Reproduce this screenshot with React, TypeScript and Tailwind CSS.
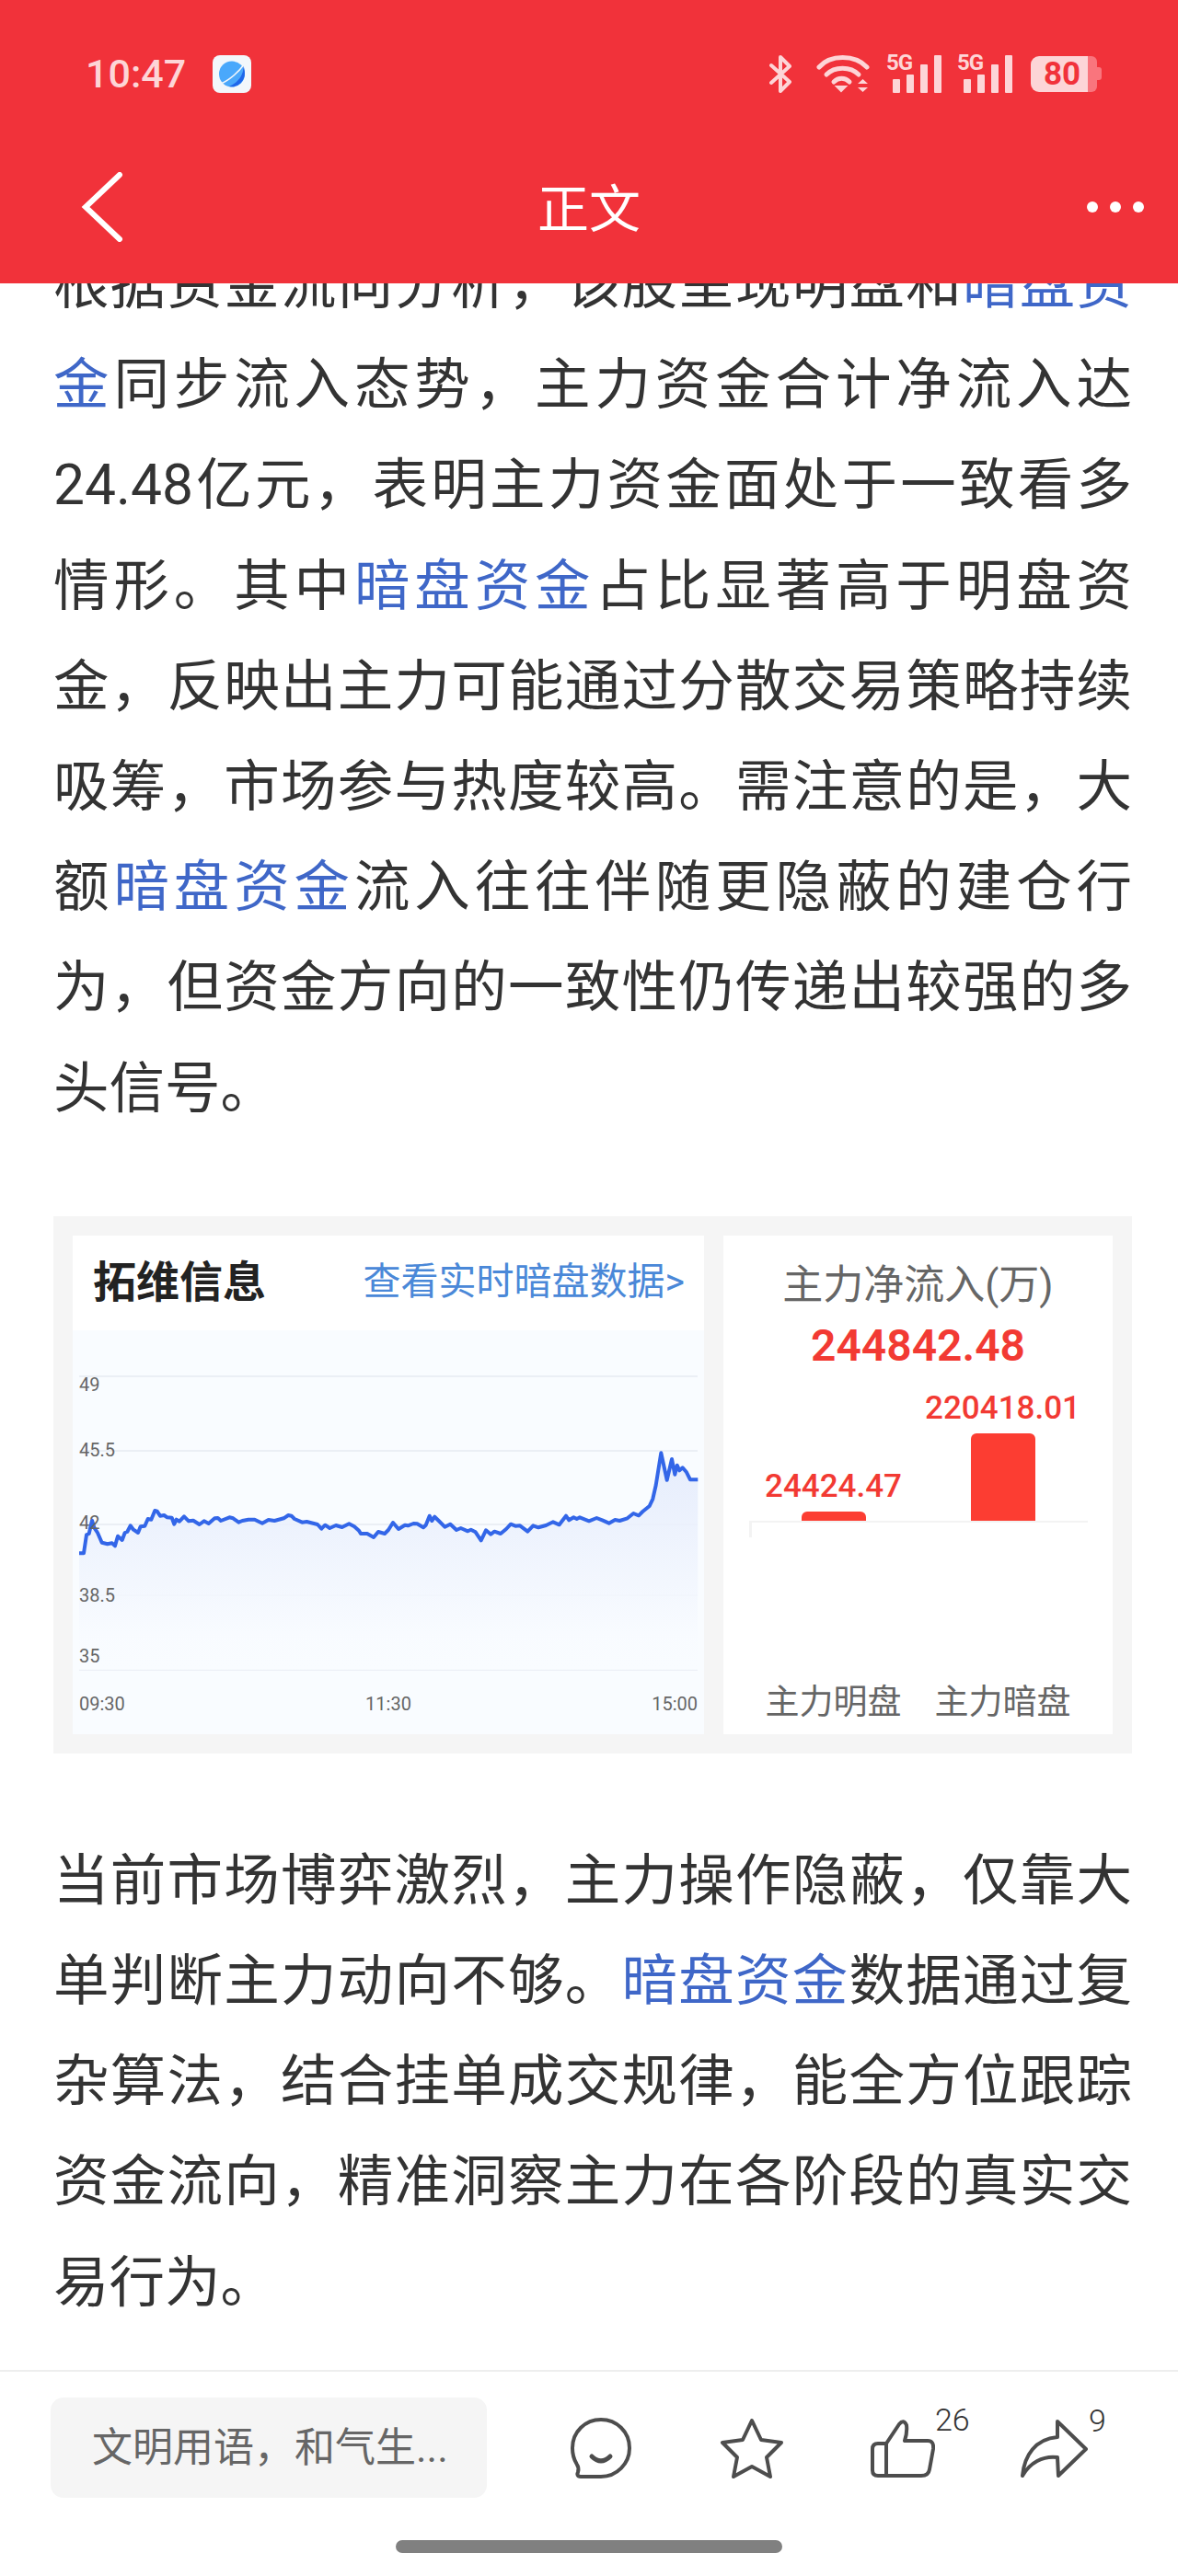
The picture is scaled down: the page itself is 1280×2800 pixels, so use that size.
const leftPart: Array<[number, number]> = [
  [48, 382], [63, 382], [72, 322], [80, 318], [90, 275], [97, 298], [108, 315], [122, 347], [140, 352], [155, 349],
  [165, 358], [174, 326], [188, 339], [197, 315], [205, 312], [215, 292], [225, 305], [240, 315], [248, 295], [262, 293],
  [272, 270], [283, 272], [295, 243], [302, 245], [312, 260], [325, 258], [335, 265], [350, 266], [358, 287], [365, 272],
  [375, 278], [390, 262], [405, 277], [420, 275], [440, 288], [455, 277], [470, 285], [490, 268], [500, 267], [510, 276],
  [538, 265], [550, 268], [568, 281], [580, 276], [600, 272], [620, 272], [645, 284], [665, 273], [685, 276], [715, 268],
  [730, 258], [740, 260], [750, 270], [775, 281], [790, 279], [825, 288], [838, 302], [850, 290], [865, 300], [885, 291],
  [905, 297], [928, 286], [945, 295], [960, 308],
]

const midPart: Array<[number, number]> = [
  [392, 1666], [399, 1666], [406, 1670], [411, 1664], [418, 1666], [422, 1662], [427, 1654], [433, 1661],
]

const rightPart: Array<[number, number]> = [
  [0, 290], [10, 292], [28, 285], [40, 286], [60, 298], [68, 290], [80, 260], [88, 276], [97, 263], [110, 276],
  [130, 296], [148, 287], [168, 306], [182, 300], [205, 310], [215, 305], [230, 313], [248, 340], [264, 307], [280, 320],
  [292, 311], [312, 318], [330, 303], [345, 287], [360, 293], [375, 292], [400, 311], [418, 292], [435, 298], [460, 291],
  [483, 280], [503, 289], [525, 260], [535, 274], [550, 265], [560, 270], [570, 265], [600, 277], [625, 267], [645, 275],
  [665, 284], [685, 273], [700, 276], [725, 268], [745, 252], [762, 259], [775, 246], [797, 228], [808, 205], [818, 160],
  [835, 55], [854, 143], [870, 75], [880, 125], [887, 95], [895, 112], [905, 103], [918, 118], [930, 142], [955, 142],
]

const points: Array<[number, number]> = [
  ...leftPart.map(([x, y]): [number, number] => [70 + x / 3, 1560 + y / 3]),
  ...midPart,
  ...rightPart.map(([x, y]): [number, number] => [440 + x / 3, 1560 + y / 3]),
]

const linePath = points.map(([x, y], i) => `${i === 0 ? 'M' : 'L'}${x.toFixed(1)} ${y.toFixed(1)}`).join(' ')
const areaPath = `${linePath} L758 1814 L86 1814 Z`

const gridLines = [1495, 1576, 1656, 1733, 1814]
const yLabels: Array<{ label: string; y: number }> = [
  { label: '49', y: 1511 },
  { label: '45.5', y: 1582 },
  { label: '42', y: 1661 },
  { label: '38.5', y: 1740 },
  { label: '35', y: 1806 },
]

function A({ children }: { children: string }) {
  return <span className="text-[#3f67c8]">{children}</span>
}

function Signal({ className }: { className?: string }) {
  return (
    <div className={`relative h-[41px] w-[60px] ${className ?? ''}`}>
      <span className="absolute -top-[1px] left-0 text-[24px] font-bold leading-[19px] tracking-[-1px] text-[#fdd5d7]">5G</span>
      <svg className="absolute inset-0" width="60" height="41" viewBox="0 0 60 41" fill="#fdd5d7">
        <rect x="7" y="26" width="8" height="15" rx="1" />
        <rect x="22" y="21" width="8" height="20" rx="1" />
        <rect x="37" y="10" width="8" height="31" rx="1" />
        <rect x="52" y="0" width="8" height="41" rx="1" />
      </svg>
    </div>
  )
}

function StatusBar() {
  return (
    <div className="flex h-[142px] items-center justify-between pl-[93px] pr-[83px] pt-[18px]">
      <div className="flex items-center">
        <span className="text-[43px] font-medium leading-none text-[#fdd5d7]">10:47</span>
        <svg className="ml-[29px]" width="42" height="41" viewBox="0 0 42 41">
          <rect width="42" height="41" rx="8" fill="#f3f7fb" />
          <circle cx="21" cy="20.5" r="14" fill="#4aa8fb" />
          <path d="M33 10 C35 18 30 29 18 34 C26 36 35 29 35 20 C35 16 34 13 33 10 Z" fill="#1f66ea" />
          <path d="M7 31 C11 31 24 24 35 9" stroke="#f3f7fb" strokeWidth="1.5" fill="none" />
        </svg>
      </div>
      <div className="flex items-center">
        <svg width="25" height="41" viewBox="0 0 25 41" fill="none" stroke="#fdd5d7" strokeWidth="4" strokeLinejoin="round" strokeLinecap="round">
          <path d="M2 11 L22 29 L12 39 V2 L22 12 L2 30" />
        </svg>
        <svg className="ml-[26px]" width="58" height="41" viewBox="0 0 58 41" fill="none" stroke="#fdd5d7" strokeWidth="5" strokeLinecap="round">
          <path d="M3 13 C15 -1 42 -1 55 13" />
          <path d="M11 21 C20 12 37 12 46 21" />
          <path d="M19 29 C24 24 31 24 36 29" />
          <path d="M22 34 L27 39 L32 34 Z" fill="#fdd5d7" strokeWidth="2" />
          <path d="M45 31 H56 L50.5 26 Z M45 35 H56 L50.5 40 Z" fill="#fdd5d7" stroke="none" />
        </svg>
        <Signal className="ml-[18px]" />
        <Signal className="ml-[17px]" />
        <div className="ml-[20px] flex h-[39px] items-center">
          <div className="flex h-[39px] w-[62px] items-center justify-center rounded-l-[9px] bg-[#fdd5d7] pl-[6px] text-[35px] font-bold leading-none text-[#f1323a]">
            80
          </div>
          <div className="h-[39px] w-[10px] rounded-r-[6px] bg-[#f9757d]" />
          <div className="h-[14px] w-[5px] rounded-r-[3px] bg-[#f9757d]" />
        </div>
      </div>
    </div>
  )
}

function Header() {
  return (
    <header className="relative z-10 h-[308px] shrink-0 bg-[#f1323a]">
      <StatusBar />
      <div className="grid h-[166px] grid-cols-3 items-center pl-[88px] pr-[37px]">
        <svg width="46" height="76" viewBox="0 0 46 76" fill="none" stroke="#fff" strokeWidth="6" strokeLinecap="round" strokeLinejoin="miter">
          <path d="M42 3 L5 38 L42 73" />
        </svg>
        <div className="-ml-[51px] mt-[5px] text-center text-[56px] font-normal leading-none text-white">正文</div>
        <div className="flex justify-end gap-[13px]">
          <span className="size-[12px] rounded-full bg-white" />
          <span className="size-[12px] rounded-full bg-white" />
          <span className="size-[12px] rounded-full bg-white" />
        </div>
      </div>
    </header>
  )
}

function PriceChart() {
  return (
    <svg width="686" height="444" viewBox="79 1445 686 444" className="block">
      <defs>
        <linearGradient id="area" x1="0" y1="1560" x2="0" y2="1814" gradientUnits="userSpaceOnUse">
          <stop offset="0" stopColor="#e0e8fb" />
          <stop offset="0.85" stopColor="#f8fbff" />
          <stop offset="1" stopColor="#f9fcff" />
        </linearGradient>
      </defs>
      {gridLines.map((y) => (
        <rect key={y} x="86" y={y - 1} width="672" height="2" fill="#ebeff5" />
      ))}
      <path d={areaPath} fill="url(#area)" fillOpacity="0.85" />
      <path d={linePath} fill="none" stroke="#3366e8" strokeWidth="4" strokeLinejoin="round" />
      {yLabels.map((l) => (
        <text key={l.label} x="86" y={l.y} fontSize="20" fill="#666">
          {l.label}
        </text>
      ))}
      <text x="86" y="1858" fontSize="20" fill="#666">09:30</text>
      <text x="422" y="1858" fontSize="20" fill="#666" textAnchor="middle">11:30</text>
      <text x="758" y="1858" fontSize="20" fill="#666" textAnchor="end">15:00</text>
    </svg>
  )
}

function FlowPanel() {
  return (
    <div className="flex w-[423px] flex-col items-center bg-white">
      <div className="mt-[31px] text-[44px] leading-[46px] text-[#666]">主力净流入(万)</div>
      <div className="mt-[18px] text-[48px] font-semibold leading-[50px] text-[#f23a33]">244842.48</div>
      <div className="mt-[24px] flex h-[143px] w-[368px] items-end border-b-2 border-[#f3f3f3]">
        <div className="flex w-[184px] flex-col items-center">
          <div className="text-[35px] font-medium leading-[40px] text-[#f23a33]">24424.47</div>
          <div className="mt-[7px] h-[10px] w-[70px] rounded-t-[6px] bg-[#fc3d32]" />
        </div>
        <div className="flex w-[184px] flex-col items-center">
          <div className="text-[35px] font-medium leading-[40px] text-[#f23a33]">220418.01</div>
          <div className="mt-[7px] h-[95px] w-[70px] rounded-t-[6px] bg-[#fc3d32]" />
        </div>
      </div>
      <div className="h-[16px] w-[368px]">
        <div className="h-[16px] w-[3px] bg-[#f3f3f3]" />
      </div>
      <div className="mt-[160px] flex w-[368px]">
        <div className="w-[184px] text-center text-[37px] leading-[40px] text-[#666]">主力明盘</div>
        <div className="w-[184px] text-center text-[37px] leading-[40px] text-[#666]">主力暗盘</div>
      </div>
    </div>
  )
}

function DataCard() {
  return (
    <div className="mt-[84px] mb-[84px] flex h-[584px] justify-between bg-[#f5f5f5] px-[21px] py-[21px]">
      <div className="w-[686px] bg-[#f9fcff]">
        <div className="flex h-[103px] items-center justify-between bg-white pb-[2px] pl-[22px] pr-[21px]">
          <div className="text-[47px] font-bold leading-none text-[#222]">拓维信息</div>
          <div className="text-[41px] leading-none text-[#4a88d8]">查看实时暗盘数据&gt;</div>
        </div>
        <PriceChart />
      </div>
      <FlowPanel />
    </div>
  )
}

function Article() {
  return (
    <main className="-mt-[53px] min-h-0 flex-1 pl-[58px] pr-[50px] text-justify text-[60.5px] leading-[109.2px] text-[#333]">
      <p>
        根据资金流向分析，该股呈现明盘和<A>暗盘资金</A>同步流入态势，主力资金合计净流入达24.48亿元，表明主力资金面处于一致看多情形。其中<A>暗盘资金</A>占比显著高于明盘资金，反映出主力可能通过分散交易策略持续吸筹，市场参与热度较高。需注意的是，大额<A>暗盘资金</A>流入往往伴随更隐蔽的建仓行为，但资金方向的一致性仍传递出较强的多头信号。
      </p>
      <DataCard />
      <p>
        当前市场博弈激烈，主力操作隐蔽，仅靠大单判断主力动向不够。<A>暗盘资金</A>数据通过复杂算法，结合挂单成交规律，能全方位跟踪资金流向，精准洞察主力在各阶段的真实交易行为。
      </p>
    </main>
  )
}

function Footer() {
  const stroke = { fill: 'none', stroke: '#4d4d4d', strokeWidth: 4, strokeLinejoin: 'round' as const, strokeLinecap: 'round' as const }
  return (
    <footer className="relative z-10 h-[224px] shrink-0 border-t-2 border-[#eeeeee] bg-white">
      <div className="flex items-center pl-[55px] pt-[28px]">
        <div className="flex h-[109px] w-[474px] items-center rounded-[14px] bg-[#f5f5f5] pl-[45px] text-[44px] leading-none text-[#666]">
          文明用语，和气生...
        </div>
        <svg className="ml-[91px]" width="66" height="66" viewBox="0 0 66 66" {...stroke}>
          <path d="M33 2 C50 2 64 15 64 33 C64 50 50 64 33 64 L11 64 C7 64 7 61 8 59 C9 56 8.5 53 6.5 50 C3.5 45 2 39 2 33 C2 15 16 2 33 2 Z" />
          <path d="M23 42 Q33 52 43 42" strokeWidth="5" />
        </svg>
        <svg className="ml-[96px]" width="70" height="66" viewBox="0 0 70 66" {...stroke}>
          <path d="M35 3 L45 24 L67 27 L51 43 L55 64 L35 53 L15 64 L19 43 L3 27 L25 24 Z" />
        </svg>
        <div className="relative ml-[94px]">
          <svg className="block" width="70" height="64" viewBox="0 0 70 64" {...stroke}>
            <path d="M17 27 L31 6 Q36 0 39 7 Q40 15 37 24 L62 24 Q69 24 68 33 L64 55 Q63 62 55 62 H8 Q2 62 2 56 V33 Q2 27 8 27 Z" />
            <path d="M17 27 V62" />
          </svg>
          <span className="absolute -top-[16px] left-[70px] text-[34px] font-light leading-[34px] text-[#333]">26</span>
        </div>
        <div className="relative ml-[93px]">
          <svg className="block" width="73" height="64" viewBox="0 0 73 64" {...stroke}>
            <path d="M40 3 L71 33 L41 62 L40 42 C24 40 10 48 2 62 C4 40 16 22 40 20 Z" />
          </svg>
          <span className="absolute -top-[15px] left-[74px] text-[34px] font-light leading-[34px] text-[#333]">9</span>
        </div>
      </div>
      <div className="mx-auto mt-[46px] h-[14px] w-[420px] rounded-full bg-[#808080]" />
    </footer>
  )
}

export default function App() {
  return (
    <div lang="zh-CN" className="flex h-[2800px] w-[1280px] flex-col overflow-hidden bg-white font-['Roboto','Noto_Sans_CJK_SC',sans-serif]">
      <Header />
      <Article />
      <Footer />
    </div>
  )
}
